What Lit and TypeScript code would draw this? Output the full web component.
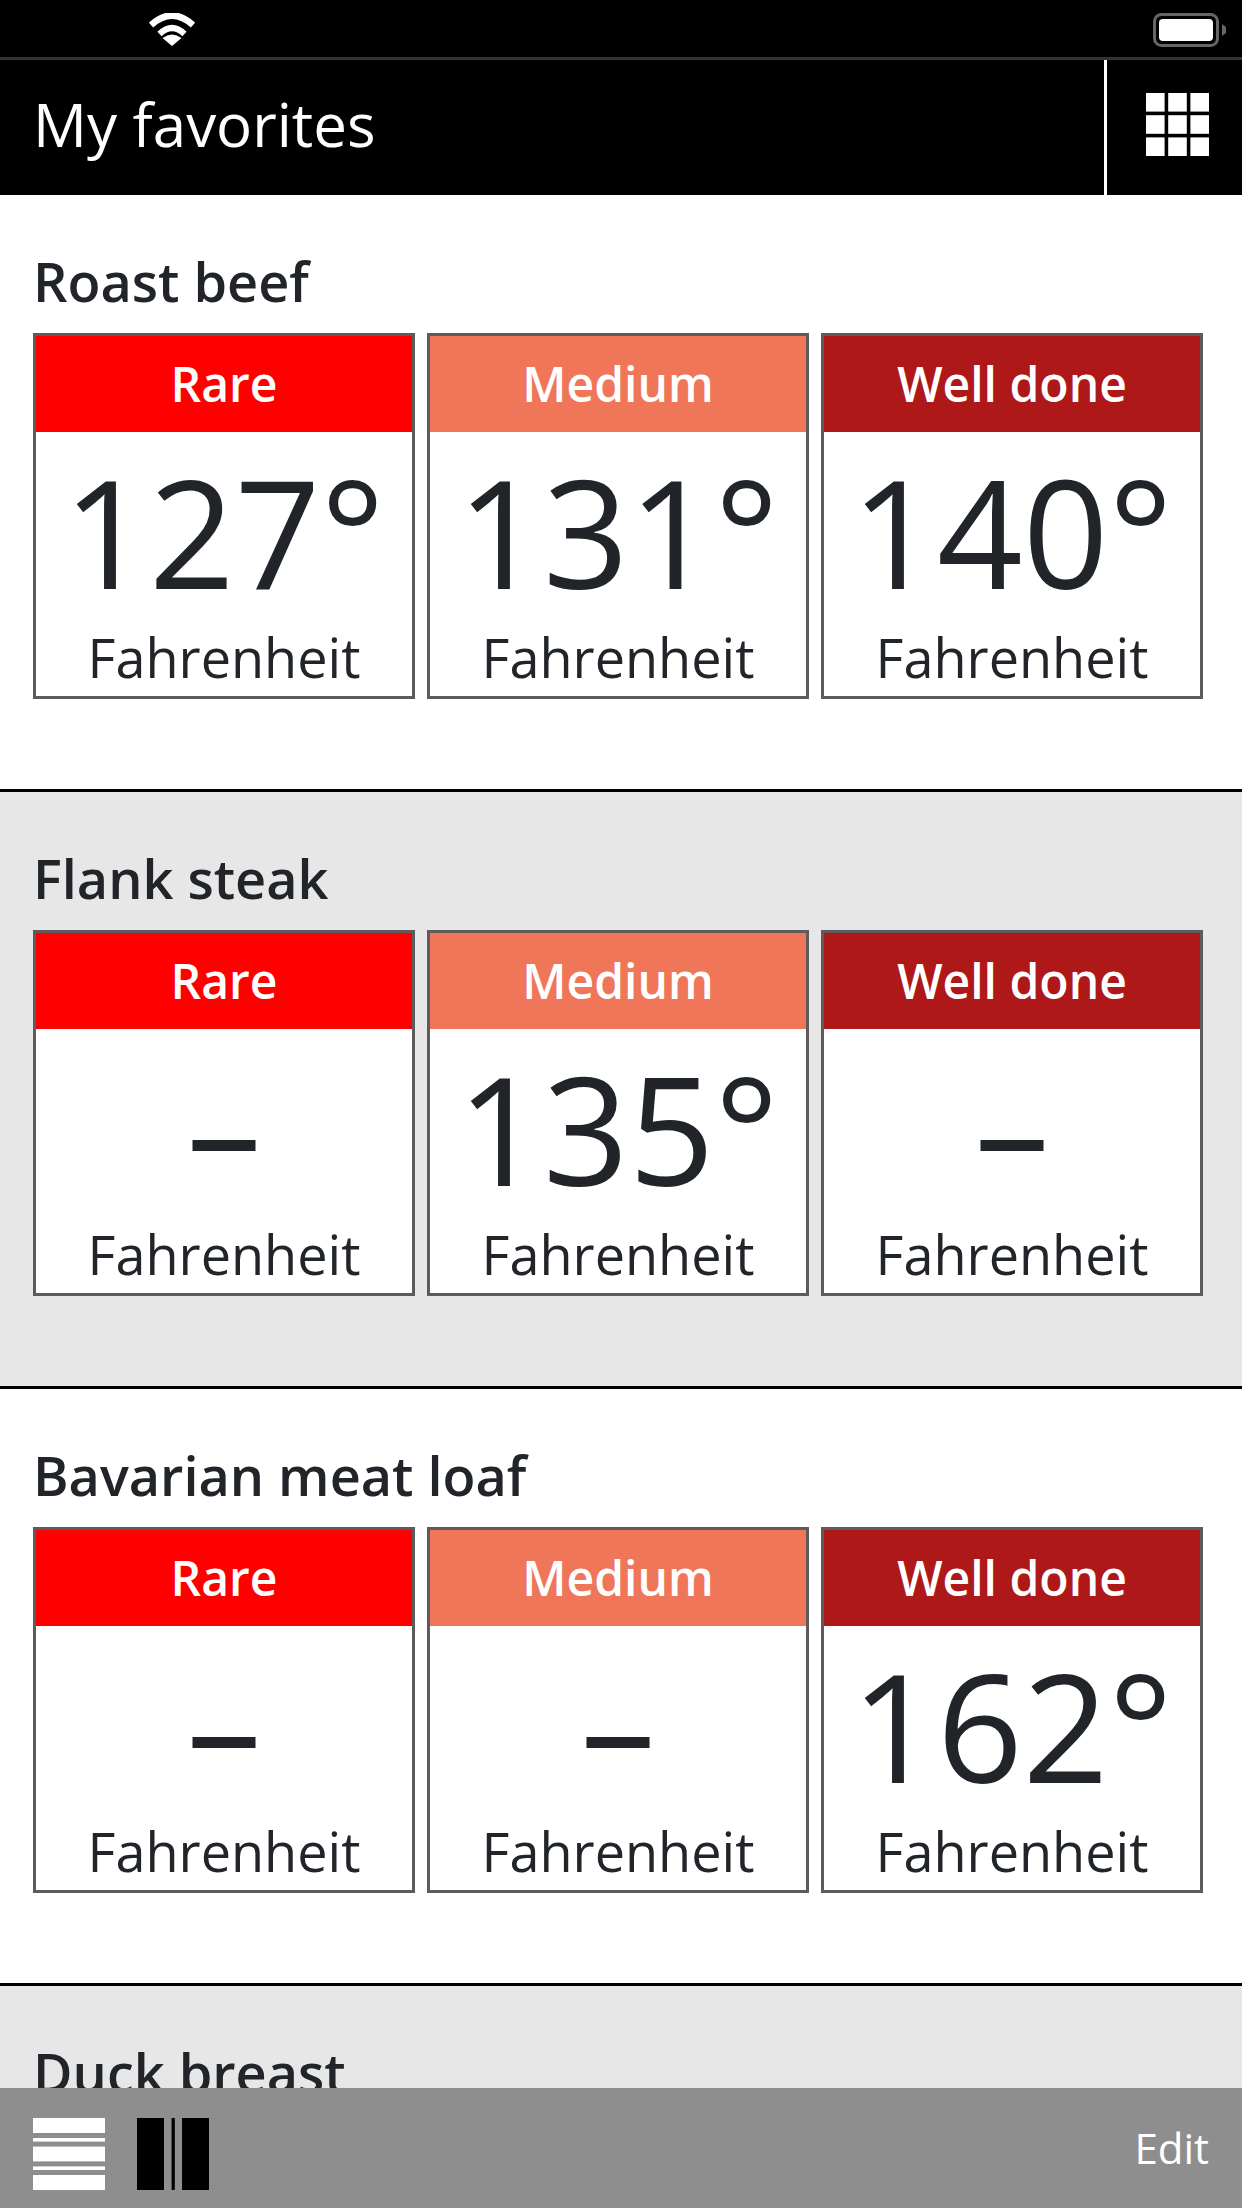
import { LitElement, html, css, svg } from "lit";
import { customElement } from "lit/decorators.js";

type Row = { name: string; temps: (string | null)[] | null };
const ROWS: Row[] = [
  { name: "Roast beef", temps: ["127°", "131°", "140°"] },
  { name: "Flank steak", temps: [null, "135°", null] },
  { name: "Bavarian meat loaf", temps: [null, null, "162°"] },
  { name: "Duck breast", temps: null },
];
const LEVELS = [
  { label: "Rare", cls: "rare" },
  { label: "Medium", cls: "medium" },
  { label: "Well done", cls: "well" },
];

@customElement("app-root")
export class AppRoot extends LitElement {
  static styles = css`
    :host { display: block; width: 1242px; height: 2208px; font-family: "Open Sans", sans-serif; color: #212529; }
    * { box-sizing: border-box; }
    .page { width: 100%; height: 100%; display: flex; flex-direction: column; overflow: hidden; background: #fff; }
    .status { flex: none; height: 60px; background: #000; border-bottom: 3px solid #333; position: relative; }
    .wifi { position: absolute; left: 149px; top: 13px; }
    .battery { position: absolute; left: 1153px; top: 13px; }
    .header { flex: none; height: 135px; background: #000; display: flex; align-items: stretch; }
    .title { flex: 1; color: #fff; font-size: 60px; font-weight: 400; padding: 0 0 8px 33px; display: flex; align-items: center; }
    .grid-btn { flex: none; width: 138px; border-left: 3px solid #fff; display: flex; align-items: center; justify-content: center; padding: 0 0 6px 6px; }
    .list { flex: 1; min-height: 0; overflow: hidden; }
    .section { height: 597px; padding: 48px 39px 0 33px; border-bottom: 3px solid #000; background: #fff; }
    .section.alt { background: #e7e7e7; }
    .name { font-size: 54px; font-weight: 600; line-height: 76px; margin: 0 0 14px; }
    .cards { display: grid; grid-template-columns: repeat(3, 382px); gap: 12px; }
    .card { height: 366px; border: 3px solid #5c5c5c; background: #fff; display: flex; flex-direction: column; align-items: center; }
    .level { align-self: stretch; height: 96px; padding-bottom: 2px; color: #fff; font-size: 48px; font-weight: 600; display: flex; align-items: center; justify-content: center; }
    .rare { background: #ff0000; }
    .medium { background: #ef7658; }
    .well { background: #af1818; }
    .temp { height: 192px; padding-top: 6px; font-size: 150px; line-height: 186px; font-weight: 400; }
    .unit { font-size: 54px; line-height: 66px; font-weight: 400; }
    .footer { flex: none; height: 120px; background: #8e8e8e; display: flex; align-items: center; padding: 12px 33px 0; }
    .footer svg { display: block; }
    .views { display: flex; gap: 32px; flex: 1; }
    .edit { color: #fff; font-size: 42px; font-weight: 400; margin-top: -14px; }
  `;

  private card(level: { label: string; cls: string }, temp: string | null) {
    return html`<div class="card">
      <div class="level ${level.cls}">${level.label}</div>
      <div class="temp">${temp ?? "–"}</div>
      <div class="unit">Fahrenheit</div>
    </div>`;
  }

  render() {
    const grid = [0, 1, 2].flatMap((r) =>
      [0, 1, 2].map((c) => svg`<rect x=${c * 22.2} y=${r * 22.2} width="18.6" height="18.6" fill="#fff"/>`)
    );
    return html`<div class="page">
      <div class="status">
        <svg class="wifi" width="46" height="34" viewBox="0 0 46 34">
          <path d="M2 12 Q23 -7 44 12" fill="none" stroke="#fff" stroke-width="6.5"/>
          <path d="M10.5 21 Q23 9 35.5 21" fill="none" stroke="#fff" stroke-width="6"/>
          <path d="M23 33 L13.5 25 Q23 18 32.5 25 Z" fill="#fff"/>
        </svg>
        <svg class="battery" width="74" height="34" viewBox="0 0 74 34">
          <rect x="1.5" y="1.5" width="63" height="31" rx="7" fill="none" stroke="#666" stroke-width="3"/>
          <rect x="6" y="6" width="54" height="22" rx="4" fill="#fff"/>
          <path d="M69 11 L73 14 V20 L69 23 Z" fill="#666"/>
        </svg>
      </div>
      <div class="header">
        <div class="title">My favorites</div>
        <div class="grid-btn">
          <svg width="63" height="63" viewBox="0 0 63 63">${grid}</svg>
        </div>
      </div>
      <div class="list">
        ${ROWS.map(
          (r, i) => html`<section class="section ${i % 2 ? "alt" : ""}">
            <h2 class="name">${r.name}</h2>
            ${r.temps
              ? html`<div class="cards">${LEVELS.map((l, j) => this.card(l, r.temps![j]))}</div>`
              : null}
          </section>`
        )}
      </div>
      <div class="footer">
        <div class="views">
          <svg width="72" height="72" viewBox="0 0 72 72">
            <rect y="0" width="72" height="15" fill="#fff"/>
            <rect y="20" width="72" height="3.6" fill="#fff"/>
            <rect y="28.6" width="72" height="14.8" fill="#fff"/>
            <rect y="48.4" width="72" height="3.6" fill="#fff"/>
            <rect y="57" width="72" height="15" fill="#fff"/>
          </svg>
          <svg width="72" height="72" viewBox="0 0 72 72">
            <rect x="0" width="27" height="72" fill="#000"/>
            <rect x="34.6" width="3.2" height="72" fill="#000"/>
            <rect x="45" width="27" height="72" fill="#000"/>
          </svg>
        </div>
        <div class="edit">Edit</div>
      </div>
    </div>`;
  }
}
